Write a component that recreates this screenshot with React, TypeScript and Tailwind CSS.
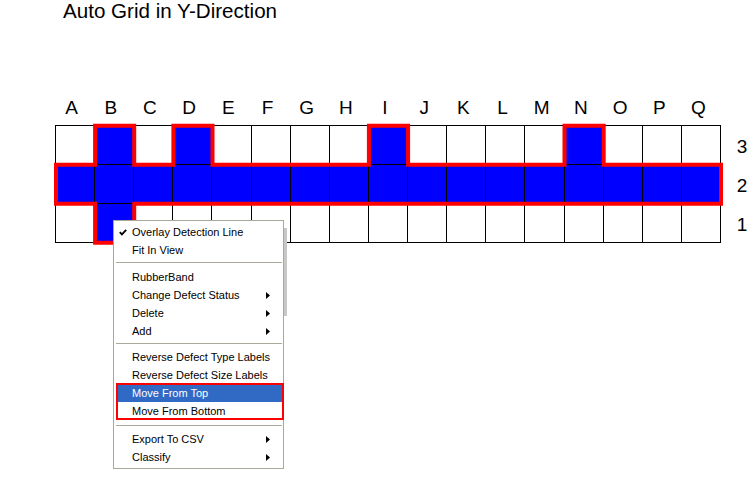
const COLS = "ABCDEFGHIJKLMNOPQ".split("");

// rows from top: 3, 2, 1
const FILLED: Record<number, number[]> = {
  0: [1, 3, 8, 13],
  1: COLS.map((_, i) => i),
  2: [1],
};

type Item = { label: string; check?: boolean; sub?: boolean; active?: boolean } | "sep";

const MENU: Item[] = [
  { label: "Overlay Detection Line", check: true },
  { label: "Fit In View" },
  "sep",
  { label: "RubberBand" },
  { label: "Change Defect Status", sub: true },
  { label: "Delete", sub: true },
  { label: "Add", sub: true },
  "sep",
  { label: "Reverse Defect Type Labels" },
  { label: "Reverse Defect Size Labels" },
  { label: "Move From Top", active: true },
  { label: "Move From Bottom" },
  "sep",
  { label: "Export To CSV", sub: true },
  { label: "Classify", sub: true },
];

const SEP_CLASS = ["h-[9px] pt-[3px]", "h-[8px] pt-[3px]", "h-[10px] pt-[5px]"];

function outlinePath() {
  const X = (i: number) => (i * 39.118 + 1).toFixed(1);
  const Y = (j: number) => (j * 39 + 0.8).toFixed(1);
  return [
    `M${X(0)} ${Y(1)}`,
    `H${X(1)} V${Y(0)} H${X(2)} V${Y(1)}`,
    `H${X(3)} V${Y(0)} H${X(4)} V${Y(1)}`,
    `H${X(8)} V${Y(0)} H${X(9)} V${Y(1)}`,
    `H${X(13)} V${Y(0)} H${X(14)} V${Y(1)}`,
    `H${X(17)} V${Y(2)} H${X(2)} V${Y(3)} H${X(1)} V${Y(2)} H${X(0)} Z`,
  ].join(" ");
}

function ContextMenu() {
  let sepIdx = 0;
  return (
    <div className="absolute left-[113px] top-[220px] w-[171px] border border-[#aca899] bg-white py-[2px] text-[11px] leading-none text-black">
      {MENU.map((item, k) => {
        if (item === "sep") {
          const cls = SEP_CLASS[sepIdx++];
          return (
            <div key={k} className={cls}>
              <div className="ml-[2px] mr-[1px] h-px bg-[#aca899]" />
            </div>
          );
        }
        return (
          <div
            key={k}
            className={
              "relative ml-[3px] mr-[1px] flex h-[18px] items-center pl-[15px] pr-[12px] " +
              (item.active ? "bg-[#316ac5] text-white" : "")
            }
          >
            {item.check && (
              <svg className="absolute left-[2px] top-[6px]" width="8" height="7" viewBox="0 0 8 7">
                <path d="M0.8 3.2 L2.9 5.4 L7.2 0.8" fill="none" stroke="black" strokeWidth="1.8" />
              </svg>
            )}
            <span className="pt-px">{item.label}</span>
            {item.sub && (
              <svg className="ml-auto" width="4" height="7" viewBox="0 0 4 7">
                <path d="M0 0 L4 3.5 L0 7 Z" fill={item.active ? "white" : "black"} />
              </svg>
            )}
          </div>
        );
      })}
    </div>
  );
}

export default function App() {
  return (
    <div className="relative h-[497px] w-[752px] overflow-hidden bg-white font-['Liberation_Sans',Arial,sans-serif] text-black">
      <div className="h-[21px] pl-[63px] pt-px text-[20.6px] leading-none">Auto Grid in Y-Direction</div>

      <div className="mt-[77px] ml-[52px] grid h-[19px] w-[666px] grid-cols-17 text-[19px] leading-none">
        {COLS.map((c) => (
          <div key={c} className="text-center">
            {c}
          </div>
        ))}
      </div>

      <div className="mt-[8px] flex">
        <div className="relative ml-[55px] w-[666px]">
          <div className="grid grid-cols-17 gap-px bg-black p-px">
            {[0, 1, 2].map((r) =>
              COLS.map((_, c) => (
                <div
                  key={`${r}-${c}`}
                  className={"h-[38px] " + (FILLED[r].includes(c) ? "bg-[#0000ff]" : "bg-white")}
                />
              ))
            )}
          </div>
          <svg className="absolute left-0 top-0 overflow-visible" width="666" height="118">
            <path d={outlinePath()} fill="none" stroke="#ff0000" strokeWidth="4" strokeLinejoin="miter" />
          </svg>
        </div>
        <div className="ml-[15px] flex w-[12px] flex-col pt-[2px] text-[19px] leading-none">
          {["3", "2", "1"].map((n) => (
            <div key={n} className="flex h-[39px] items-center justify-center">
              {n}
            </div>
          ))}
        </div>
      </div>

      <div className="absolute left-[284px] top-[228px] h-[88px] w-[3px] bg-[#c8c8c8]" />
      <ContextMenu />
      <div className="absolute left-[116px] top-[383px] h-[37px] w-[168px] border-2 border-[#ff0000]" />
    </div>
  );
}
